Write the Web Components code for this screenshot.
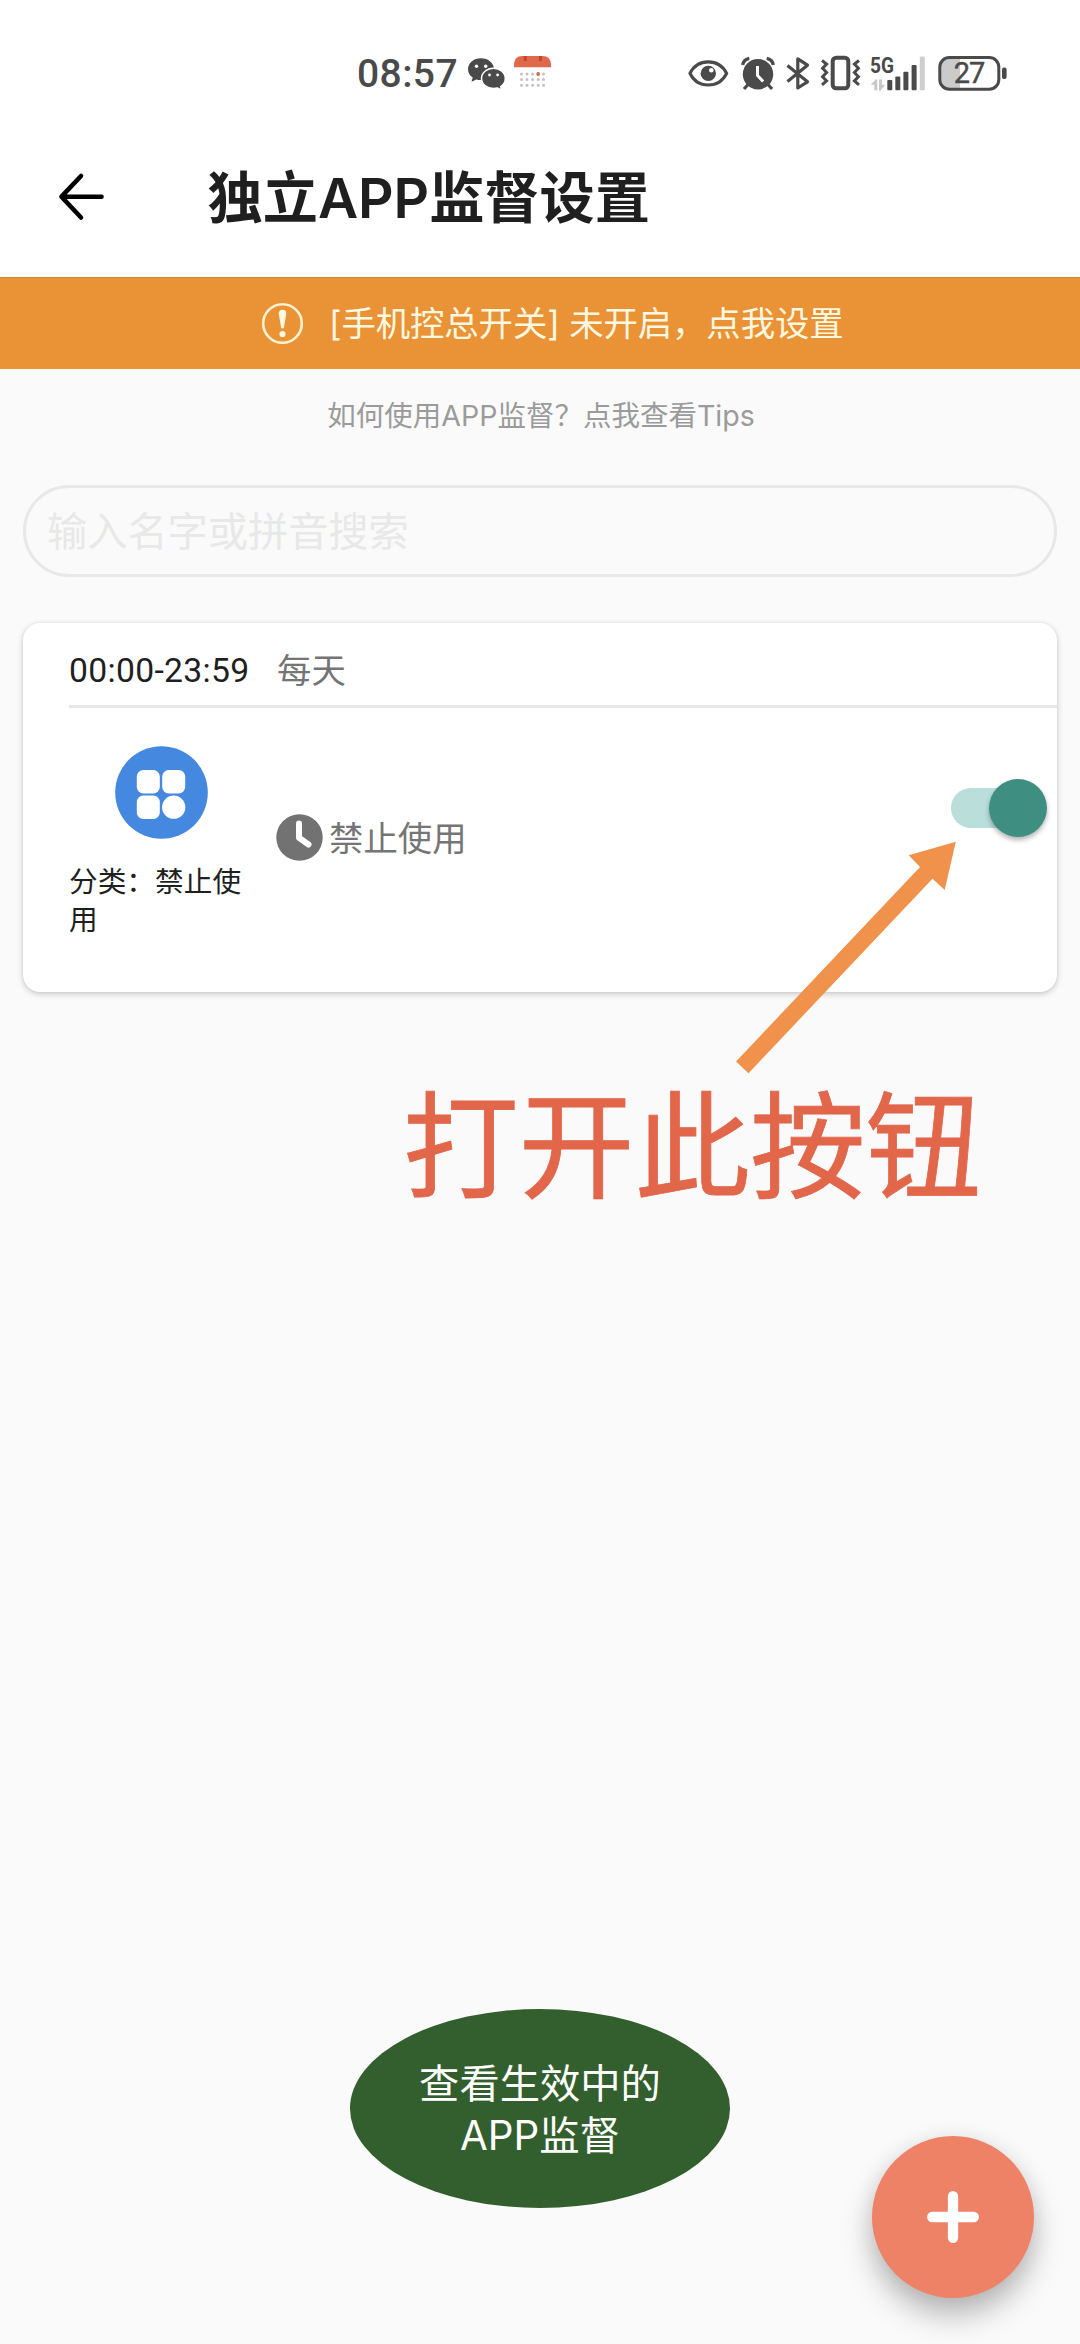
<!DOCTYPE html>
<html lang="zh-CN">
<head>
<meta charset="utf-8">
<title>独立APP监督设置</title>
<style>
html,body{margin:0;padding:0}
body{width:1080px;height:2344px;overflow:hidden;background:#fafafa;font-family:Inter,"Noto Sans CJK SC",sans-serif}
</style>
</head>
<body>
<supervise-page></supervise-page>
<script>
function define(name, css, html){
  const t=document.createElement('template');
  t.innerHTML='<style>*{box-sizing:border-box}svg{display:block;flex:none}'+css+'</style>'+html;
  customElements.define(name, class extends HTMLElement{
    constructor(){super();this.attachShadow({mode:'open'}).append(t.content.cloneNode(true));}
  });
}

define('status-bar', `
:host{display:flex;height:146px;padding:50px 73px 0 357px;color:#4a4a4a;justify-content:space-between;align-items:flex-start}
.left{display:flex;height:48px;align-items:center}
.time{font:500 39px/48px Roboto,sans-serif;width:111px;letter-spacing:.4px;white-space:nowrap}
`, `
<div class="left"><span class="time">08:57</span>
<svg width="84" height="48" viewBox="468 50 84 48">
<g fill="#4a4a4a"><path d="M481 58.3c-7.3 0-13 4.9-13 11 0 3.500 1.800 6.400 4.700 8.300l-1.200 4.200 4.900-2.400c1.500.4 3 .6 4.600.6 7.200 0 13-4.900 13-10.700 0-6.100-5.800-11-13-11z"/>
<path stroke="#fff" stroke-width="1.500" d="M493.500 68.300c-6.600 0-12 4.500-12 10.100s5.400 10.100 12 10.100c1.400 0 2.700-.2 4-.5l4.100 2.200-1-3.700c2.800-1.900 4.700-4.800 4.700-8.100 0-5.600-5.300-10.100-11.800-10.100z"/></g>
<g fill="#fff"><circle cx="476.500" cy="66.200" r="1.700"/><circle cx="485.700" cy="66.200" r="1.700"/><circle cx="489.500" cy="75" r="1.400"/><circle cx="497.600" cy="75" r="1.400"/></g>
<path fill="#e0684b" d="M514 67.300v-2.500c0-5.400 3.200-8.800 8.500-8.800h20c5.300 0 8.500 3.400 8.500 8.800v2.500z"/>
<path stroke="#c84330" stroke-width="3" d="M525.300 56v5M540.400 56v5"/>
<g fill="#c2c2c2"><circle cx="521.500" cy="74" r="1.500"/><circle cx="527" cy="74" r="1.500"/><circle cx="532.600" cy="74" r="1.500"/><circle cx="538.200" cy="74" r="1.900" fill="#d86843"/><circle cx="543.500" cy="74" r="1.500"/>
<circle cx="521.500" cy="79.600" r="1.500"/><circle cx="527" cy="79.600" r="1.500"/><circle cx="532.600" cy="79.600" r="1.500"/><circle cx="538.200" cy="79.600" r="1.500"/><circle cx="543.500" cy="79.600" r="1.500"/>
<circle cx="521.500" cy="85.200" r="1.500"/><circle cx="527" cy="85.200" r="1.500"/><circle cx="532.600" cy="85.200" r="1.500"/><circle cx="538.200" cy="85.200" r="1.500"/><circle cx="543.500" cy="85.200" r="1.500"/></g>
</svg></div>
<svg width="322" height="48" viewBox="685 50 322 48">
<path fill="none" stroke="#4a4a4a" stroke-width="3.200" d="M690 73.400C693.500 66 700 61.800 708.300 61.800S723 66 726.600 73.400C723 80.800 716.600 85 708.300 85S693.500 80.800 690 73.400z"/>
<circle cx="708.300" cy="73.400" r="7.700" fill="#4a4a4a"/><circle cx="711.300" cy="70.300" r="2.300" fill="#fff"/>
<circle cx="758" cy="74.200" r="15.200" fill="#4a4a4a"/>
<path fill="none" stroke="#4a4a4a" stroke-width="3.200" d="M742.700 65c.6-3.400 3.200-6 6.600-6.600M773.300 65c-.6-3.400-3.200-6-6.600-6.600M748.500 84l-4.500 5M767.500 84l4.500 5"/>
<path fill="none" stroke="#fff" stroke-width="3" d="M757.500 66v9.500l5.600 6"/>
<path fill="none" stroke="#4a4a4a" stroke-width="3.200" stroke-linejoin="round" d="M787.500 65.500l20 16.300-9.700 6.200V58.800l9.700 6.400-20 16.300"/>
<rect x="832.700" y="57.700" width="15.600" height="30.600" rx="3.500" fill="none" stroke="#4a4a4a" stroke-width="4"/>
<path fill="none" stroke="#4a4a4a" stroke-width="3" d="M822 60.500l4.600 3.600-4 4.200 4 4.200-4 4.200 4 4.200-4.600 4M859 60.500l-4.600 3.600 4 4.200-4 4.200 4 4.200-4 4.200 4.600 4"/>
<text x="870" y="72.600" font-family="Roboto,sans-serif" font-weight="700" font-size="21.500" textLength="24" lengthAdjust="spacingAndGlyphs" fill="#4a4a4a">5G</text>
<path fill="#c8c8c8" d="M875.500 79.500h1.800v10.700h-3v-5.500h-3.500zM879 79.500h3v5.300h3.200l-4.400 5.600H879z"/>
<g fill="#4a4a4a"><rect x="887.300" y="80" width="5" height="10.300" rx="1"/><rect x="895.300" y="76.600" width="5" height="13.700" rx="1"/><rect x="903.400" y="71.800" width="5" height="18.500" rx="1"/><rect x="911.600" y="65" width="5" height="25.300" rx="1"/></g>
<rect x="919.800" y="56.500" width="5" height="33.800" rx="1" fill="#cfcfcf"/>
<path fill="#cbcbcb" d="M960 58.500h-12c-5 0-8 3-8 8v14c0 5 3 8 8 8h12z"/>
<rect x="939.800" y="57.600" width="59" height="31.600" rx="9.500" fill="none" stroke="#4a4a4a" stroke-width="3"/>
<rect x="1002" y="67.500" width="4.600" height="11.500" rx="2" fill="#4a4a4a"/>
<text x="953.700" y="83.400" font-family="Roboto,sans-serif" font-weight="400" font-size="29" textLength="31.500" fill="#4a4a4a" stroke="#4a4a4a" stroke-width=".4">27</text>
</svg>`);

define('title-bar', `
:host{display:flex;height:131px;padding-left:57px;align-items:flex-start}
svg{margin-top:24px}
h1{margin:19px 0 0 100.500px;font:700 55.200px/66px Inter,"Noto Sans CJK SC",sans-serif;color:#1f1f1f;white-space:nowrap}
.l{font-weight:600}
`, `<svg width="50" height="54" viewBox="57 170 50 54" fill="none" stroke="#000" stroke-width="4.600" stroke-linecap="round" stroke-linejoin="round"><path d="M61.500 196.700H101.500M81 176L61.500 196.700 81 217.500"/></svg>
<h1>独立<span class="l">APP</span>监督设置</h1>`);

define('alert-banner', `
:host{display:flex;height:92px;background:#ea9236;box-shadow:inset 0 1px #cf842f;color:#fff8e0;padding-left:261px;align-items:center;font-size:34.400px;line-height:50px;white-space:pre}
span{margin:2px 0 0 25px;letter-spacing:-.1px}
`, `<svg width="43" height="43" viewBox="0 0 43 43"><circle cx="21.500" cy="21.500" r="19.300" fill="none" stroke="#fff3cf" stroke-width="2.600"/><path fill="#fff8e0" d="M17.700 11.500a3.800 3.800 0 0 1 7.600 0l-2.500 14.800h-2.600z"/><circle cx="21.500" cy="32" r="3.100" fill="#fff8e0"/></svg><span><slot></slot></span>`);

define('tips-link', `:host{display:block;margin-top:27px;height:39px;padding-left:2px;text-align:center;font-size:28.500px;line-height:40px;color:#9b9b9b;white-space:pre}`, `<slot></slot>`);

define('search-field', `:host{display:block;margin:50px 23px 0;height:92px;border:3px solid #e8e8e8;border-radius:46px;padding-left:21px;font-size:40.200px;line-height:87px;color:#e8e8e8}`, `<slot></slot>`);

define('toggle-switch', `
:host{display:flex;align-items:center;width:96px;height:58px}
.track{width:78px;height:40px;border-radius:20px;background:#badfdb;display:flex;align-items:center}
.thumb{flex:none;margin-left:37.500px;width:58px;height:58px;border-radius:50%;background:#3e8f82;box-shadow:0 3px 5px rgba(0,0,0,.3)}
`, `<div class="track"><div class="thumb"></div></div>`);

define('rule-card', `
:host{display:block;margin:46px 23px 0;height:369px;background:#fff;border-radius:17px;box-shadow:0 2px 6px rgba(0,0,0,.2),0 0 2px rgba(0,0,0,.08)}
.head{display:flex;margin-left:46px;height:85px;border-bottom:3.500px solid #e8e8e8;color:#757575;font-size:34.400px;line-height:48px;padding-top:24px}
.time{font-family:Roboto,sans-serif;font-size:33.700px;color:#1f1f1f;width:208px;letter-spacing:.3px;white-space:nowrap}
.body{display:flex;align-items:flex-start;padding-left:46px}
.app{width:180px;padding-top:38px;font-size:28.700px;line-height:38.500px;color:#1f1f1f}
.app svg{margin:0 0 23.500px 46px}
.name{width:174px}
.mode{display:flex;align-items:center;gap:6px;margin:104px 0 0 27px;color:#757575;font-size:34.400px;line-height:48px;flex:1}
.mode span{padding-top:3px}
toggle-switch{margin:71px 10px 0 0}
`, `
<div class="head"><span class="time"><slot name="time"></slot></span><span><slot name="days"></slot></span></div>
<div class="body">
<div class="app"><svg width="93" height="93" viewBox="0 0 93 93"><circle cx="46.500" cy="46.500" r="46.300" fill="#4588e0"/><g fill="#fff"><rect x="21.800" y="24" width="23" height="23.400" rx="6.500"/><rect x="47.200" y="24" width="23" height="23.400" rx="6.500"/><rect x="21.800" y="49.600" width="23" height="23.400" rx="6.500"/><circle cx="58.700" cy="61.200" r="11.600"/></g></svg><div class="name"><slot name="app"></slot></div></div>
<div class="mode"><svg width="47" height="47" viewBox="0 0 47 47"><circle cx="23.500" cy="23.500" r="23.200" fill="#727272"/><path d="M23 9.500v14.300l9.500 6.700" fill="none" stroke="#fff" stroke-width="6" stroke-linecap="round" stroke-linejoin="round"/></svg><span><slot name="mode"></slot></span></div>
<toggle-switch></toggle-switch>
</div>`);

define('hint-callout', `
:host{position:absolute;left:403px;top:840px;width:590px;display:block}
svg{margin-left:332px}
p{margin:-6px 0 0;font:400 115.700px/140px "Noto Sans CJK SC",sans-serif;color:#e2664a;white-space:nowrap;-webkit-text-stroke:.8px #e2664a}
`, `<svg width="222" height="235" viewBox="735 840 222 235"><path fill="#f0924c" d="M955.800 841.700L944.700 890l-12.200-11.200L748.500 1073.200 736 1061.500 920 867l-11.300-11.700z"/></svg><p><slot></slot></p>`);

define('active-button', `
:host{display:flex;width:380px;height:199px;margin:1017px 0 0 350px;border-radius:50%;background:#335e2d;color:#fff;font-size:40.300px;line-height:52.500px;text-align:center;align-items:center;justify-content:center}
div{padding-top:3px}
`, `<div><slot></slot></div>`);

define('add-button', `
:host{position:absolute;left:872px;top:2136px;width:162px;height:162px;border-radius:50%;background:#ee8267;display:flex;align-items:center;justify-content:center;box-shadow:0 18px 30px rgba(0,0,0,.25),0 2px 22px rgba(0,0,0,.08)}
`, `<svg width="54" height="54" viewBox="0 0 54 54" stroke="#fff" stroke-width="10.300" stroke-linecap="round"><path d="M27 6.200v41.600M6.200 27h41.600"/></svg>`);

define('supervise-page', `
:host{display:block;position:relative;width:1080px;height:2344px;overflow:hidden;background:#fafafa}
.top{background:#fff}
`, `
<div class="top"><status-bar></status-bar><title-bar></title-bar></div>
<alert-banner>[手机控总开关] 未开启，点我设置</alert-banner>
<tips-link>如何使用APP监督？点我查看Tips</tips-link>
<search-field>输入名字或拼音搜索</search-field>
<rule-card><span slot="time">00:00-23:59</span><span slot="days">每天</span><span slot="app">分类：禁止使用</span><span slot="mode">禁止使用</span></rule-card>
<active-button>查看生效中的<br>APP监督</active-button>
<hint-callout>打开此按钮</hint-callout>
<add-button></add-button>`);
</script>
</body>
</html>
